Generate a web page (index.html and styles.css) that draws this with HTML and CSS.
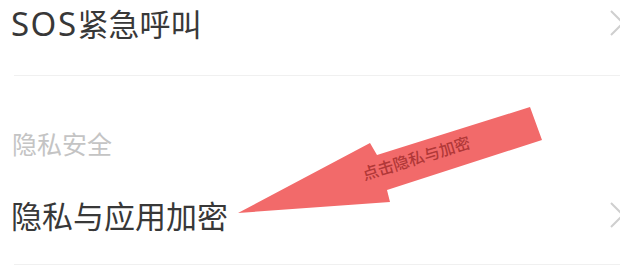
FILE: index.html
```html
<!DOCTYPE html>
<html lang="zh">
<head>
<meta charset="utf-8">
<link rel="stylesheet" href="styles.css">
</head>
<body>
<div class="screen">
  <div class="list">
    <div class="row row-top">
      <span class="label"><span class="latin">SOS</span>紧急呼叫</span>
      <svg class="chev" width="10" height="26" viewBox="0 0 10 26"><polyline points="1,1 13,13 1,25" fill="none" stroke="#cfcfcf" stroke-width="2"/></svg>
    </div>
    <div class="divider"></div>
    <div class="section">隐私安全</div>
    <div class="row">
      <span class="label">隐私与应用加密</span>
      <svg class="chev" width="10" height="26" viewBox="0 0 10 26"><polyline points="1,1 13,13 1,25" fill="none" stroke="#cfcfcf" stroke-width="2"/></svg>
    </div>
    <div class="divider"></div>
  </div>
  <svg class="annot" width="620" height="269" viewBox="0 0 620 269">
    <polygon points="238,213 370,143 377,155 530,107 542,140 387,190 390,202" fill="#f26a6a"/>
    <text x="0" y="0" transform="translate(418,164) rotate(-17)" text-anchor="middle" class="annot-text">点击隐私与加密</text>
  </svg>
</div>
</body>
</html>
```
FILE: styles.css
```css
html, body {
  margin: 0;
  padding: 0;
  background: #ffffff;
}
body {
  width: 620px;
  height: 269px;
  overflow: hidden;
  font-family: "Noto Sans CJK SC", "Noto Sans", sans-serif;
}
.screen {
  position: relative;
  width: 620px;
  height: 269px;
  overflow: hidden;
}
.list {
  display: flex;
  flex-direction: column;
  margin-top: -23px;
}
.row {
  box-sizing: border-box;
  height: 98px;
  display: flex;
  align-items: center;
  justify-content: space-between;
  padding-left: 11px;
}
.row-top {
  padding-bottom: 6px;
}
.label {
  font-size: 31px;
  line-height: 40px;
  color: #383838;
  white-space: nowrap;
}
.latin {
  font-family: "Noto Sans", sans-serif;
  font-size: 33px;
  letter-spacing: 1.5px;
}
.chev {
  overflow: visible;
  display: block;
}
.divider {
  height: 1px;
  margin-left: 14px;
  background: #f0f0f0;
}
.section {
  padding: 54px 0 10px 12px;
  font-size: 25px;
  line-height: 26px;
  color: #c4c4c4;
}
.annot {
  position: absolute;
  left: 0;
  top: 0;
}
.annot-text {
  font-family: "Noto Sans CJK SC", sans-serif;
  font-size: 16px;
  font-weight: 500;
  fill: #a02a2a;
  fill-opacity: 0.8;
}
```
